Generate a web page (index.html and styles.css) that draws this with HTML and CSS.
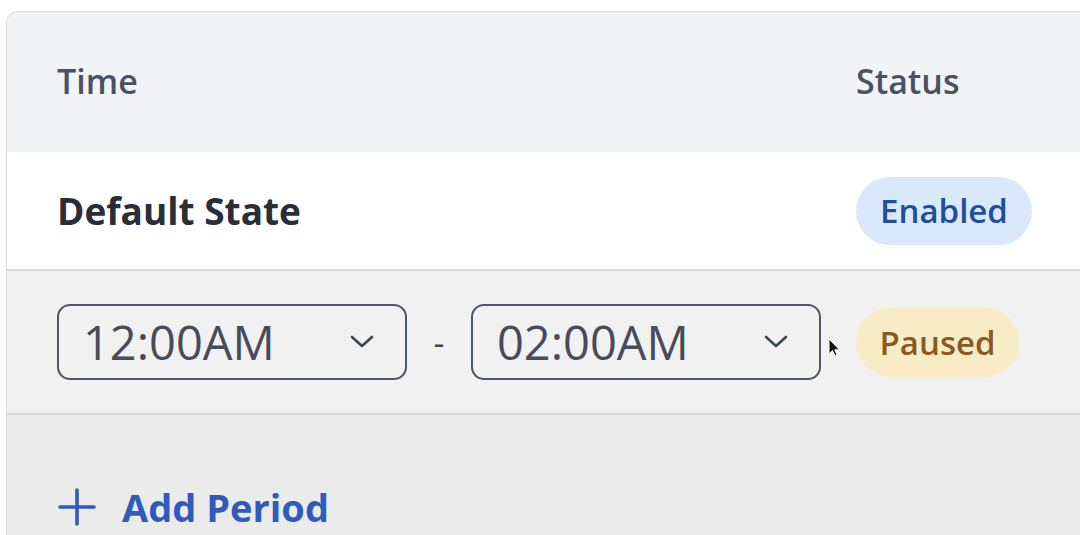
FILE: index.html
```html
<!DOCTYPE html>
<html>
<head>
<meta charset="utf-8">
<link rel="stylesheet" href="styles.css">
</head>
<body>
<div class="card">
  <div class="row head">
    <div class="c1">Time</div>
    <div class="c2">Status</div>
  </div>
  <div class="row def">
    <div class="c1 bold">Default State</div>
    <div class="c2"><span class="pill enabled">Enabled</span></div>
  </div>
  <div class="row period">
    <div class="c1 times">
      <div class="select"><span>12:00AM</span>
        <svg class="chev" width="26" height="16" viewBox="0 0 26 16"><path d="M3 3 L13 12 L23 3" fill="none" stroke="#3f4553" stroke-width="2.6" stroke-linecap="round" stroke-linejoin="round"/></svg>
      </div>
      <span class="dash">-</span>
      <div class="select"><span>02:00AM</span>
        <svg class="chev" width="26" height="16" viewBox="0 0 26 16"><path d="M3 3 L13 12 L23 3" fill="none" stroke="#3f4553" stroke-width="2.6" stroke-linecap="round" stroke-linejoin="round"/></svg>
      </div>
    </div>
    <div class="c2"><span class="pill paused">Paused</span></div>
    <svg class="cursor" width="14" height="20" viewBox="0 0 14 20"><path d="M1 1 L1 16 L4.5 12.5 L7 18 L9 17 L6.8 11.8 L11.5 11.8 Z" fill="#111" stroke="#fff" stroke-width="1"/></svg>
  </div>
  <div class="add">
    <svg width="40" height="40" viewBox="0 0 40 40"><path d="M20 3 V37 M3 20 H37" stroke="#2f5bbf" stroke-width="3.6" stroke-linecap="round"/></svg>
    <span>Add Period</span>
  </div>
</div>
</body>
</html>
```
FILE: styles.css
```css
html, body {
  margin: 0;
  padding: 0;
  background: #ffffff;
  overflow: hidden;
  width: 1080px;
  height: 535px;
}
body {
  font-family: "Open Sans", Lato, sans-serif;
  padding-top: 11px;
  padding-left: 6px;
  box-sizing: border-box;
}
.card {
  width: 1120px;
  height: 524px;
  border: 1px solid #dadbdd;
  border-bottom: 0;
  border-radius: 12px 0 0 0;
  overflow: hidden;
  background: #ebebec;
}
.row {
  display: grid;
  grid-template-columns: 799px 1fr;
  align-items: center;
  padding-left: 50px;
  position: relative;
}
.head {
  height: 140px;
  background: #f2f3f6;
  color: #4a5162;
  font-size: 34px;
  font-weight: 600;
  padding-bottom: 2px;
  box-sizing: border-box;
}
.def {
  height: 117px;
  background: #ffffff;
  border-bottom: 2px solid #d9d9db;
  color: #2b2e36;
}
.bold {
  font-size: 37px;
  font-weight: 700;
}
.pill {
  display: inline-flex;
  align-items: center;
  justify-content: center;
  border-radius: 36px;
  font-size: 33px;
  font-weight: 600;
}
.enabled {
  width: 176px;
  height: 68px;
  background: #d9e8fb;
  color: #1f4e9e;
}
.paused {
  width: 163px;
  height: 70px;
  background: #f8ecc6;
  color: #8a5a22;
}
.period {
  height: 142px;
  background: #f1f1f2;
  border-bottom: 2px solid #d8d8da;
}
.times {
  display: flex;
  align-items: center;
}
.select {
  box-sizing: border-box;
  width: 350px;
  height: 76px;
  border: 2px solid #4f5667;
  border-radius: 13px;
  display: flex;
  align-items: center;
  justify-content: space-between;
  padding: 0 30px 0 24px;
  font-size: 47px;
  color: #474c58;
}
.chev {
  display: block;
}
.dash {
  width: 64px;
  text-align: center;
  font-size: 34px;
  color: #3f4553;
}
.cursor {
  position: absolute;
  left: 821px;
  top: 67px;
}
.add {
  display: flex;
  align-items: center;
  gap: 25px;
  padding-left: 50px;
  padding-top: 66px;
  color: #2f5bbf;
  font-size: 38px;
  font-weight: 700;
}
.add svg {
  display: block;
}
```
